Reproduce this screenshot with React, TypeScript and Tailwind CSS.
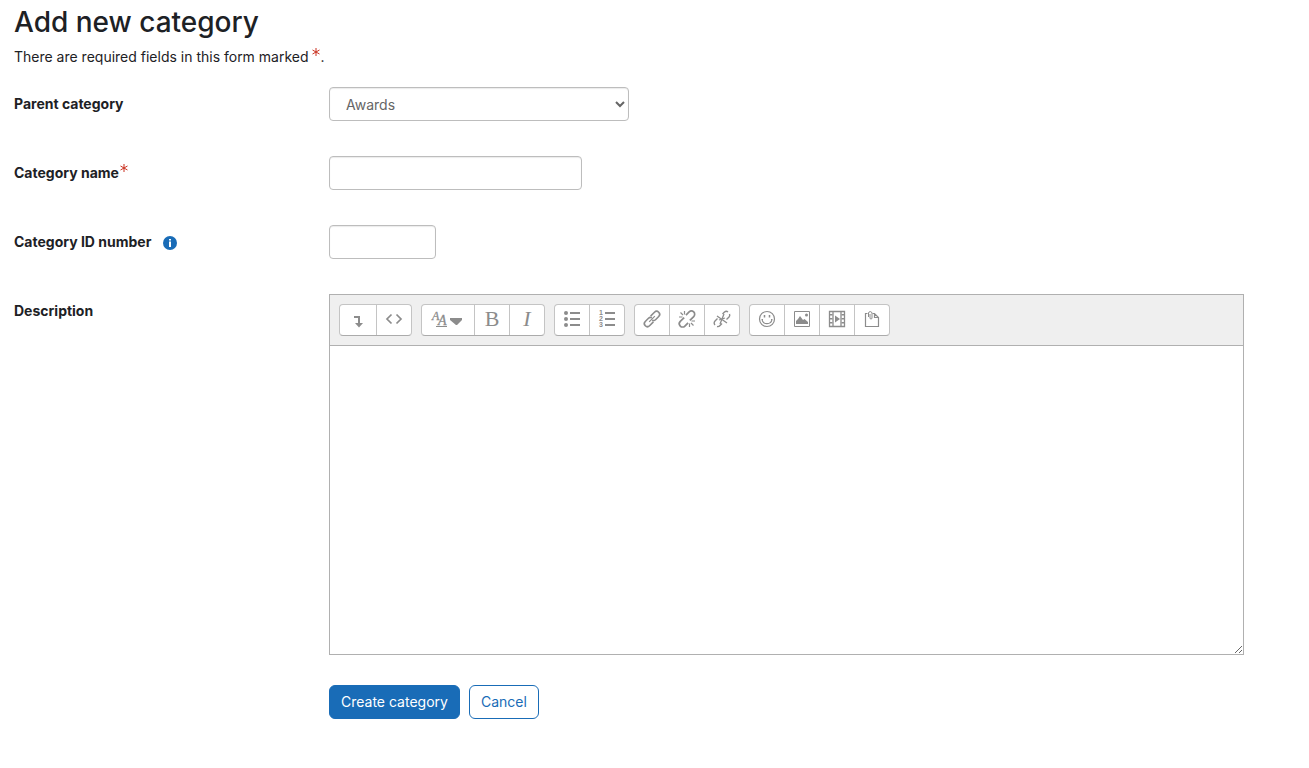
import type { ReactNode } from "react";
import clsx from "clsx";

const FIELD =
  "block h-[34px] rounded border border-[#bdbdbd] bg-white text-sm text-[#666666] shadow-[inset_0_1px_1px_rgba(0,0,0,0.08)]";

function Icon({ children, width = 18 }: { children: ReactNode; width?: number }) {
  return (
    <svg
      width={width}
      height="18"
      viewBox={`0 0 ${width} 18`}
      fill="none"
      stroke="#8c8c8c"
      className="overflow-visible"
      aria-hidden="true"
    >
      {children}
    </svg>
  );
}

const LETTER = "font-['Liberation_Serif',serif] text-[22px] leading-7 text-[#8c8c8c]";

const ICONS = {
  collapse: (
    <Icon>
      <path d="M5 7h5v7" strokeWidth="2" />
      <path d="M6 13h8l-4 4.500z" fill="#8c8c8c" stroke="none" />
    </Icon>
  ),
  html: (
    <Icon>
      <path d="M6.500 4.500L2 9l4.500 4.500M11.500 4.500L16 9l-4.500 4.500" strokeWidth="1.7" />
    </Icon>
  ),
  styles: (
    <Icon width={32}>
      <g
        fill="#8c8c8c"
        strokeWidth="0.3"
        fontFamily="Liberation Serif, serif"
        fontStyle="italic"
      >
        <text x="1" y="10" fontSize="12">A</text>
        <text x="7" y="15" fontSize="14">A</text>
      </g>
      <path d="M5 16h11v1H5zM19 8h12v2l-5 5h-1l-6-5z" fill="#8c8c8c" stroke="none" />
    </Icon>
  ),
  bold: <span className={LETTER}>B</span>,
  italic: <span className={clsx(LETTER, "italic")}>I</span>,
  bullets: (
    <Icon>
      <path d="M7 3h10M7 9h10M7 15h10" strokeWidth="2" />
      <g fill="#8c8c8c" stroke="none">
        <circle cx="3" cy="3" r="2" />
        <circle cx="3" cy="9" r="2" />
        <circle cx="3" cy="15" r="2" />
      </g>
    </Icon>
  ),
  numbers: (
    <Icon>
      <path d="M7 3h10M7 9h10M7 15h10" strokeWidth="2" />
      <g fill="#8c8c8c" stroke="none" fontFamily="Liberation Sans, sans-serif" fontSize="7" fontWeight="700">
        <text x="1" y="5">1</text>
        <text x="1" y="11">2</text>
        <text x="1" y="17">3</text>
      </g>
    </Icon>
  ),
  link: (
    <Icon>
      <g transform="rotate(-45 9 9)" strokeWidth="1.6">
        <path d="M8 12H2.500a3 3 0 0 1 0-6H7a3 3 0 0 1 2.800 2" />
        <path d="M10 6h5.500a3 3 0 0 1 0 6H11a3 3 0 0 1-2.800-2" />
        <path d="M5 9h8" strokeWidth="1.200" />
      </g>
    </Icon>
  ),
  unlink: (
    <Icon>
      <g transform="rotate(-45 9 9)" strokeWidth="1.7">
        <path d="M7 12.500H2.500a3 3 0 0 1 0-6.500H8" />
        <path d="M11 5.500h4.500a3 3 0 0 1 0 6.500H10" />
      </g>
      <path
        d="M6.500 1v3.500M2.500 2.500l2.500 2.500M1 7h3.500M11.500 13.500V17M13 13l2.500 2.500M13.500 11H17"
        strokeWidth="1.200"
      />
    </Icon>
  ),
  noLink: (
    <Icon>
      <path d="M4.500 8.500L2 11a2.800 2.800 0 0 0 0 4M4 16.500a3 3 0 0 0 3-1l2-2" strokeWidth="1.400" />
      <path d="M9.500 4l2-2a2.800 2.800 0 0 1 3.500 0M16.500 4a2.800 2.800 0 0 1-.5 3l-2.500 2.500" strokeWidth="1.400" />
      <path d="M4 6l10 7M11 4L7 14M6 10l6-2" strokeWidth="1.300" />
    </Icon>
  ),
  emoji: (
    <Icon>
      <circle cx="9" cy="9" r="7.500" strokeWidth="1.200" />
      <path d="M4 9.500c1 5.500 9 5.500 10 0M3.500 9.500h1.500M13 9.500h1.500" strokeWidth="1.200" />
      <path d="M6.500 5v2.500M11.500 5v2.500" strokeWidth="1.500" />
    </Icon>
  ),
  image: (
    <Icon>
      <path d="M1.500 1.500h15v15h-15z" />
      <path d="M3 14v-3l2-2 2-3 3 4 1.500-1L15 12v2z" fill="#8c8c8c" stroke="none" />
      <circle cx="13.500" cy="5" r="1.500" fill="#8c8c8c" stroke="none" />
    </Icon>
  ),
  media: (
    <Icon>
      <path d="M1.500 1.500h15v15h-15zM5 1.500v15M13 1.500v15" strokeWidth="1.300" />
      <path d="M3 4v13M15 4v13" strokeWidth="3" strokeDasharray="1.500 2.500" />
      <path d="M7 5.500l5 3.500-5 3.500z" fill="#8c8c8c" stroke="none" />
    </Icon>
  ),
  files: (
    <Icon>
      <path d="M4.500 3.500h-2v13h13V7.500l-4-4H9.500M11.500 3.500v4h4" strokeWidth="1.200" />
      <path d="M5.500 7V3a1.800 1.800 0 0 1 3.500 0v5a1 1 0 0 1-2 0V4" strokeWidth="1" />
    </Icon>
  ),
};

const TOOLBAR: { label: string; icon: ReactNode; width: string }[][] = [
  [
    { label: "Show more buttons", icon: ICONS.collapse, width: "w-9" },
    { label: "HTML", icon: ICONS.html, width: "w-[34px]" },
  ],
  [
    { label: "Paragraph styles", icon: ICONS.styles, width: "w-[50px] pr-0.5" },
    { label: "Bold", icon: ICONS.bold, width: "w-[34px]" },
    { label: "Italic", icon: ICONS.italic, width: "w-[34px]" },
  ],
  [
    { label: "Unordered list", icon: ICONS.bullets, width: "w-[34px]" },
    { label: "Ordered list", icon: ICONS.numbers, width: "w-[34px]" },
  ],
  [
    { label: "Link", icon: ICONS.link, width: "w-[34px]" },
    { label: "Unlink", icon: ICONS.unlink, width: "w-[34px]" },
    { label: "Prevent automatic linking", icon: ICONS.noLink, width: "w-[34px]" },
  ],
  [
    { label: "Emoji picker", icon: ICONS.emoji, width: "w-[34px]" },
    { label: "Insert image", icon: ICONS.image, width: "w-[34px]" },
    { label: "Insert media", icon: ICONS.media, width: "w-[34px]" },
    { label: "Manage files", icon: ICONS.files, width: "w-[34px]" },
  ],
];

function Required() {
  return (
    <svg className="inline-block align-super" width="8" height="8" viewBox="0 0 8 8" role="img" aria-label="Required">
      <path d="M4 0v8M.5 2l7 4M7.500 2l-7 4" stroke="#ca3120" strokeWidth="1" />
    </svg>
  );
}

function FormRow({
  id,
  label,
  extra,
  children,
}: {
  id?: string;
  label: string;
  extra?: ReactNode;
  children: ReactNode;
}) {
  return (
    <div className="grid grid-cols-[19fr_61fr] gap-[30px]">
      <div className="flex h-[34px] items-center text-sm font-bold">
        <label htmlFor={id}>{label}</label>
        {extra}
      </div>
      <div className="min-w-0">{children}</div>
    </div>
  );
}

function Editor() {
  return (
    <div className="border border-[#b0b0b0]">
      <div className="flex flex-wrap gap-[9px] border-b border-[#b0b0b0] bg-[#efefef] p-[9px]">
        {TOOLBAR.map((group, i) => (
          <div
            key={i}
            className="flex h-8 divide-x divide-[#c4c4c4] rounded border border-[#c4c4c4] border-b-[#ababab] bg-white"
          >
            {group.map((b) => (
              <button
                key={b.label}
                type="button"
                title={b.label}
                className={clsx("box-content flex h-7 items-center justify-center pb-0.5", b.width)}
              >
                {b.icon}
              </button>
            ))}
          </div>
        ))}
      </div>
      <textarea id="description" className="block h-[308px] w-full resize-y p-2 text-sm outline-none" />
    </div>
  );
}

export default function App() {
  return (
    <main className="bg-white pt-1 pr-[65px] pb-12 pl-[14px] font-['Inter',sans-serif] text-sm text-[#1d2125]">
      <h1 className="text-[28px] leading-9 font-medium">Add new category</h1>
      <p className="mt-[7px] leading-5">
        There are required fields in this form marked <Required />.
      </p>

      <form className="mt-5 flex flex-col gap-[35px]" onSubmit={(e) => e.preventDefault()}>
        <FormRow id="parent" label="Parent category">
          <select id="parent" className={clsx(FIELD, "w-[300px] pl-3")}>
            <option>Awards</option>
          </select>
        </FormRow>

        <FormRow
          id="name"
          label="Category name"
          extra={
            <span className="mb-2.5 ml-px flex">
              <Required />
            </span>
          }
        >
          <input id="name" type="text" required className={clsx(FIELD, "w-[253px] px-3")} />
        </FormRow>

        <FormRow
          id="idnumber"
          label="Category ID number"
          extra={
            <button type="button" aria-label="Help with Category ID number" className="mt-0.5 ml-3">
              <svg width="14" height="14" viewBox="0 0 14 14" className="block">
                <circle cx="7" cy="7" r="7" fill="#196cb7" />
                <path d="M6 3h2v1.500H6zM6 5.500h2V11H6z" fill="#fff" />
              </svg>
            </button>
          }
        >
          <input id="idnumber" type="text" className={clsx(FIELD, "w-[107px] px-3")} />
        </FormRow>

        <FormRow id="description" label="Description">
          <Editor />
          <div className="mt-[30px] flex gap-[9px]">
            <button type="submit" className="h-[34px] rounded-md border border-[#196cb7] bg-[#196cb7] px-[11px] text-white">
              Create category
            </button>
            <button type="button" className="h-[34px] rounded-md border border-[#196cb7] bg-white px-[11px] text-[#196cb7]">
              Cancel
            </button>
          </div>
        </FormRow>
      </form>
    </main>
  );
}
